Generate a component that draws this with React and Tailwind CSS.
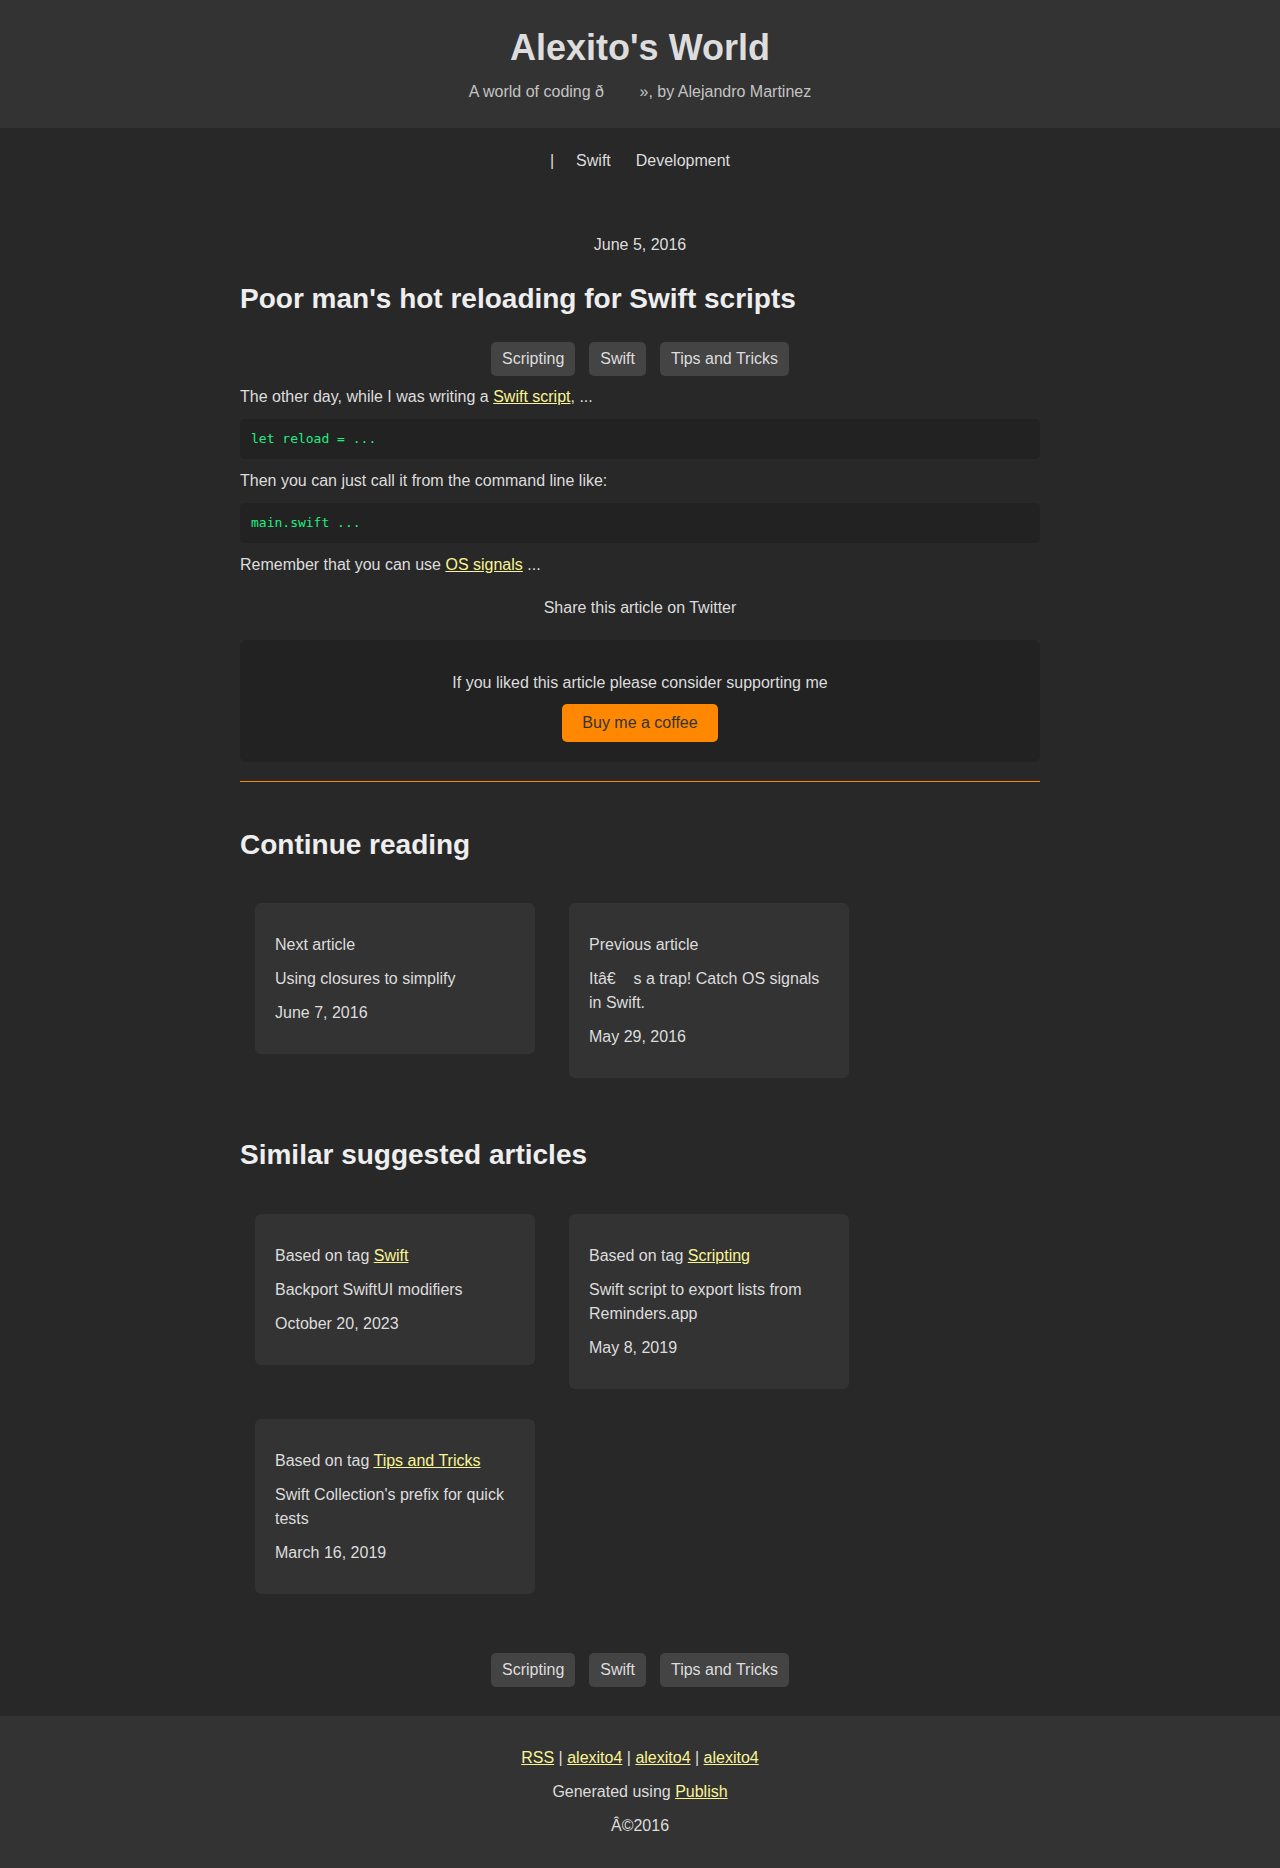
const TAGS = ['Scripting', 'Swift', 'Tips and Tricks']

const linkCls = 'text-[#faf594] underline'
const codeCls = "bg-[#222] rounded-[5px] px-[11px] py-3 leading-[16px] text-[13px] text-[#20ee80] font-['DejaVu_Sans_Mono',monospace]"

function TagList({ className = '' }) {
  return (
    <div className={`flex justify-center gap-[14px] ${className}`}>
      {TAGS.map(t => (
        <a key={t} className="bg-[#444] rounded-[5px] px-[11px] py-[5px] leading-[24px] text-[#ddd]">
          {t}
        </a>
      ))}
    </div>
  )
}

function Card({ label, title, date }) {
  return (
    <div className="w-[280px] bg-[#333] rounded-[6px] px-5 pt-[30px] pb-[29px] flex flex-col gap-[10px] leading-[24px]">
      <p>{label}</p>
      <p>{title}</p>
      <p>{date}</p>
    </div>
  )
}

export default function App() {
  return (
    <div className="min-h-[1868px] bg-[#282828] text-[#ddd] text-[16px] font-['Liberation_Sans',Arial,sans-serif] flex flex-col">
      {/* Header */}
      <header className="bg-[#333] h-[128px] pt-[26px] flex flex-col items-center">
        <h1 className="text-[36px] font-bold leading-[43px] text-[#ddd]">Alexito's World</h1>
        <p className="mt-[11px] leading-[24px] text-[#c4c4c4]">
          A world of coding ð{'\u00a0\u00a0\u00a0\u00a0\u00a0\u00a0\u00a0\u00a0'}», by Alejandro Martinez
        </p>
      </header>

      {/* Nav */}
      <nav className="pt-[21px] flex justify-center leading-[24px]">
        <span>|</span>
        <a className="ml-[22px]">Swift</a>
        <a className="ml-[25px]">Development</a>
      </nav>

      <main className="w-[800px] mx-auto flex-1">
        <p className="mt-[60px] text-center leading-[24px]">June 5, 2016</p>
        <h1 className="mt-[25px] text-[28px] font-bold leading-[34px] text-[#eee]">
          Poor man's hot reloading for Swift scripts
        </h1>
        <TagList className="mt-[26px]" />

        <div className="mt-[9px] flex flex-col gap-[10px] leading-[24px]">
          <p>
            The other day, while I was writing a <a className={linkCls}>Swift script</a>, ...
          </p>
          <pre className={codeCls}>let reload = ...</pre>
          <p>Then you can just call it from the command line like:</p>
          <pre className={codeCls}>main.swift ...</pre>
          <p>
            Remember that you can use <a className={linkCls}>OS signals</a> ...
          </p>
        </div>

        <p className="mt-[19px] text-center leading-[24px]">Share this article on Twitter</p>

        {/* Support box */}
        <div className="mt-[20px] bg-[#222] rounded-[6px] pt-[31px] pb-5 flex flex-col items-center">
          <p className="leading-[24px]">If you liked this article please consider supporting me</p>
          <a className="mt-[9px] bg-[#ff8800] text-[#333] rounded-[5px] px-5 py-[10px] leading-[18px]">
            Buy me a coffee
          </a>
        </div>

        <hr className="mt-[19px] border-0 border-t border-[#ff8800]" />

        <h2 className="mt-[47px] text-[28px] font-bold leading-[32px] text-[#eee]">Continue reading</h2>
        <div className="mt-[42px] px-[15px] flex flex-wrap items-start gap-x-[34px] gap-y-[30px]">
          <Card label="Next article" title="Using closures to simplify" date="June 7, 2016" />
          <Card
            label="Previous article"
            title={'Itâ€\u00a0\u00a0\u00a0 s a trap! Catch OS signals in Swift.'}
            date="May 29, 2016"
          />
        </div>

        <h2 className="mt-[61px] text-[28px] font-bold leading-[32px] text-[#eee]">Similar suggested articles</h2>
        <div className="mt-[43px] px-[15px] flex flex-wrap items-start gap-x-[34px] gap-y-[30px]">
          <Card
            label={<>Based on tag <a className={linkCls}>Swift</a></>}
            title="Backport SwiftUI modifiers"
            date="October 20, 2023"
          />
          <Card
            label={<>Based on tag <a className={linkCls}>Scripting</a></>}
            title="Swift script to export lists from Reminders.app"
            date="May 8, 2019"
          />
          <Card
            label={<>Based on tag <a className={linkCls}>Tips and Tricks</a></>}
            title="Swift Collection's prefix for quick tests"
            date="March 16, 2019"
          />
        </div>

        <TagList className="mt-[59px] mb-[28px]" />
      </main>

      {/* Footer */}
      <footer className="bg-[#333] h-[152px] pt-[30px] flex flex-col items-center gap-[10px] leading-[24px]">
        <p>
          <a className={linkCls}>RSS</a> | <a className={linkCls}>alexito4</a> | <a className={linkCls}>alexito4</a> |{' '}
          <a className={linkCls}>alexito4</a>
        </p>
        <p>
          Generated using <a className={linkCls}>Publish</a>
        </p>
        <p>Â©2016</p>
      </footer>
    </div>
  )
}
